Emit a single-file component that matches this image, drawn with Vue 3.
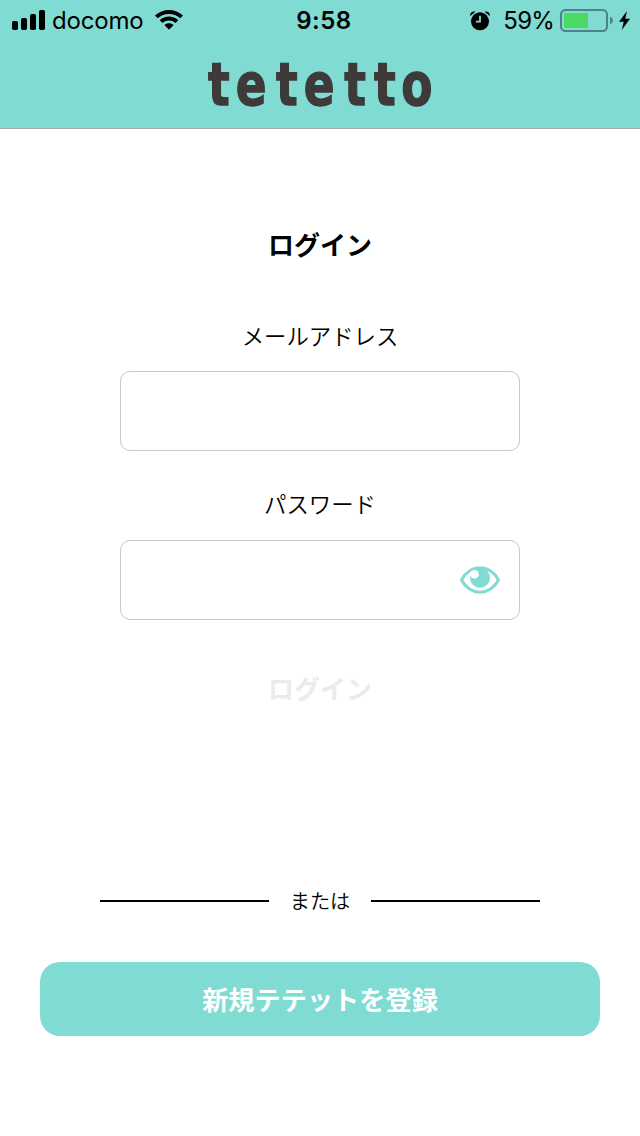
<template>
  <div class="page">

    <!-- HEADER -->
    <header class="header">
      <div class="status">
        <div class="status-left">
          <svg class="signal" width="33" height="20" viewBox="0 0 33 20">
            <rect v-for="(bar, index) in bars" :key="index" :x="index * 9" :y="20 - bar" width="6" :height="bar" rx="1.8" />
          </svg>
          <span class="carrier">docomo</span>
          <svg class="wifi" width="28" height="20" viewBox="0 0 28 20">
            <path d="M0 5.6C7.600-1.850 20.400-1.850 28 5.600L25.300 8.300C19.200 2.400 8.800 2.400 2.700 8.300Z" />
            <path d="M4.700 10.200C9.900 5.300 18.100 5.300 23.300 10.200L20.500 13C16.900 9.700 11.100 9.700 7.500 13Z" />
            <path d="M9.400 15C12 12.700 16 12.700 18.600 15L14 19.700Z" />
          </svg>
        </div>

        <div class="time">9:58</div>

        <div class="status-right">
          <svg class="alarm" width="20" height="20" viewBox="0 0 20 20">
            <path d="M0.300 5C-0.300 1.800 2 0 5.400 0.700ZM19.700 5C20.300 1.800 18 0 14.600 0.700Z" />
            <circle cx="10" cy="10.300" r="9" />
            <path class="alarm-hand" d="M10 4.800V10.700H5.800" />
          </svg>
          <span class="percent">59%</span>
          <svg class="battery" width="54" height="23" viewBox="0 0 54 23">
            <rect class="battery-case" x="1" y="1" width="46" height="21" rx="4.500" />
            <rect class="battery-level" x="4" y="4" width="24" height="15" rx="1" />
            <path class="battery-cap" d="M50 7.800C53.800 9 53.800 14 50 15.200Z" />
          </svg>
          <svg class="bolt" width="11" height="20" viewBox="0 0 11 20">
            <path d="M8 0L0 10.800H4.700L2.800 19L11 7.800H6.200Z" />
          </svg>
        </div>
      </div>

      <svg class="logo" width="240" height="80" viewBox="0 0 240 80">
        <text transform="scale(0.77 1)" :x="logoX" y="61">tetetto</text>
      </svg>
    </header>

    <!-- LOGIN -->
    <main class="login">
      <h1>ログイン</h1>

      <label for="email">メールアドレス</label>
      <div class="field">
        <input id="email" v-model="email" type="email" />
      </div>

      <label for="password">パスワード</label>
      <div class="field">
        <input id="password" v-model="password" :type="showPassword ? 'text' : 'password'" />
        <button class="eye" type="button" aria-label="パスワードを表示" @click="showPassword = !showPassword">
          <svg width="40" height="28" viewBox="0 0 40 28">
            <path class="eye-outline" d="M1.500 14C10.500-2.200 29.500-2.200 38.500 14C29.500 30.200 10.500 30.200 1.500 14Z" />
            <circle class="eye-iris" cx="20" cy="11.700" r="10" />
            <circle class="eye-shine" cx="14.500" cy="8.200" r="4.300" />
          </svg>
        </button>
      </div>

      <button class="submit" type="button" :disabled="!email || !password">ログイン</button>
    </main>

    <!-- REGISTER -->
    <div class="divider">
      <span>または</span>
    </div>

    <button class="register" type="button">新規テテットを登録</button>

  </div>
</template>

<script setup>
import { ref } from 'vue'

const email = ref('')
const password = ref('')
const showPassword = ref(false)

const bars = [9, 12, 16, 20]

// start of each letter of the logo
const logoX = '10.500 46.300 98.700 134.700 187.500 226 261.500'
</script>

<style>
body {
  margin: 0;
  background: #fff;
}
</style>

<style scoped>
.page {
  display: flex;
  flex-direction: column;
  min-height: 1136px;
  background: #fff;
  color: #000;
  font-family: "Noto Sans CJK JP", sans-serif;
}

button {
  padding: 0;
  border: none;
  background: none;
  font-family: inherit;
  cursor: pointer;
}

svg {
  display: block;
  flex: none;
}

/* HEADER */
.header {
  height: 128px;
  background: #80dbd3;
  border-bottom: 1px solid #a7a9ac;
}

.status {
  display: grid;
  grid-template-columns: 1fr auto 1fr;
  height: 40px;
  padding: 0 10px 0 12px;
  font-family: Inter, sans-serif;
  font-size: 24px;
  line-height: 41px;
}

.status-left,
.status-right {
  display: flex;
  align-items: center;
  height: 40px;
}

.status-right {
  justify-content: flex-end;
  height: 41px;
}

.carrier {
  width: 91px;
  margin: 0 12px 0 7px;
  letter-spacing: -0.2px;
}

.time {
  padding-left: 6px;
  font-weight: 600;
  letter-spacing: 0.5px;
}

.percent {
  margin: 0 6px 0 13px;
  letter-spacing: -0.8px;
}

.alarm-hand {
  fill: none;
  stroke: #80dbd3;
  stroke-width: 1.8;
}

.battery-case {
  fill: none;
  stroke: #4d8480;
  stroke-width: 2;
}

.battery-level {
  fill: #4cd964;
}

.battery-cap {
  fill: #4d8480;
}

.bolt {
  margin-left: 5px;
}

.logo {
  margin: 4px auto 0;
  fill: #3e3a39;
  stroke: #3e3a39;
  stroke-width: 1.4;
  font-family: "DejaVu Sans", sans-serif;
  font-size: 59px;
  font-weight: 700;
}

/* LOGIN */
.login {
  display: flex;
  flex-direction: column;
  align-items: center;
}

h1 {
  margin: 95px 0 0;
  font-size: 26px;
  font-weight: 700;
  line-height: 40px;
}

label {
  margin-top: 35px;
  font-size: 22.4px;
  font-weight: 350;
  line-height: 34px;
}

h1 + label {
  margin-top: 54px;
}

.field {
  display: flex;
  align-items: center;
  box-sizing: border-box;
  width: 400px;
  height: 80px;
  margin-top: 20px;
  padding: 0 19px;
  border: 1px solid #c8c8c8;
  border-radius: 10px;
}

h1 + label + .field {
  margin-top: 19px;
}

.field input {
  flex: 1;
  min-width: 0;
  border: none;
  outline: none;
  background: none;
  font-size: 24px;
}

.eye-outline {
  fill: #fff;
  stroke: #80dbd3;
  stroke-width: 3;
}

.eye-iris {
  fill: #80dbd3;
}

.eye-shine {
  fill: #fff;
}

.submit {
  margin-top: 48px;
  color: #000;
  font-size: 26px;
  font-weight: 700;
  line-height: 40px;
}

.submit:disabled {
  color: #ebebeb;
}

/* REGISTER */
.divider {
  display: flex;
  align-items: center;
  gap: 21px;
  margin: 178px 100px 0;
  font-size: 20.200px;
  font-weight: 350;
  line-height: 30px;
}

.divider::before,
.divider::after {
  content: "";
  flex: 1;
  height: 2px;
  background: #000;
}

.register {
  height: 74px;
  margin: 46px 40px 0;
  border-radius: 20px;
  background: #80dbd3;
  color: #fff;
  font-size: 26.200px;
  font-weight: 700;
}
</style>
